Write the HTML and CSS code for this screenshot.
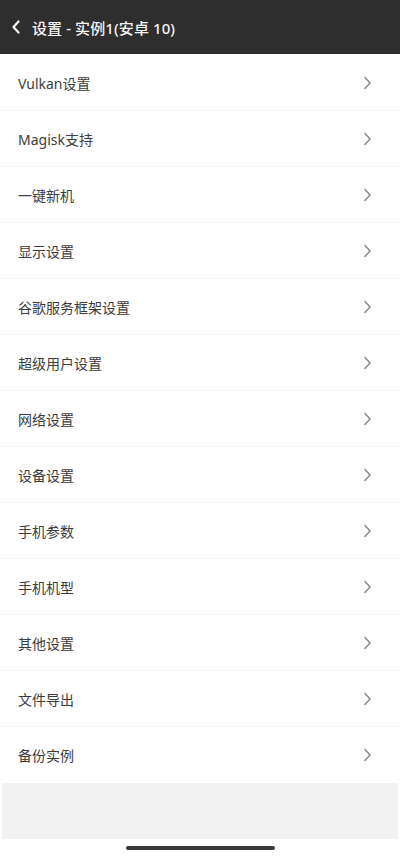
FILE: index.html
```html
<!DOCTYPE html>
<html lang="zh-CN">
<head>
<meta charset="utf-8">
<title>设置 - 实例1(安卓 10)</title>
<link rel="stylesheet" href="styles.css">
</head>
<body>
<div class="screen">
  <header class="topbar">
    <svg class="back" width="10" height="14" viewBox="0 0 10 14"><path d="M7.5 1.5 L2.5 7 L7.5 12.5" fill="none" stroke="#fff" stroke-width="2.2" stroke-linecap="round" stroke-linejoin="round"/></svg>
    <span class="title">设置 - 实例1(安卓 10)</span>
  </header>
  <ul class="list">
    <li class="row"><span>Vulkan设置</span><svg class="chev" width="9" height="14" viewBox="0 0 9 14"><path d="M2 1.5 L7 7 L2 12.5" fill="none" stroke="#8e8e8e" stroke-width="1.6" stroke-linecap="round" stroke-linejoin="round"/></svg></li>
    <li class="row"><span>Magisk支持</span><svg class="chev" width="9" height="14" viewBox="0 0 9 14"><path d="M2 1.5 L7 7 L2 12.5" fill="none" stroke="#8e8e8e" stroke-width="1.6" stroke-linecap="round" stroke-linejoin="round"/></svg></li>
    <li class="row"><span>一键新机</span><svg class="chev" width="9" height="14" viewBox="0 0 9 14"><path d="M2 1.5 L7 7 L2 12.5" fill="none" stroke="#8e8e8e" stroke-width="1.6" stroke-linecap="round" stroke-linejoin="round"/></svg></li>
    <li class="row"><span>显示设置</span><svg class="chev" width="9" height="14" viewBox="0 0 9 14"><path d="M2 1.5 L7 7 L2 12.5" fill="none" stroke="#8e8e8e" stroke-width="1.6" stroke-linecap="round" stroke-linejoin="round"/></svg></li>
    <li class="row"><span>谷歌服务框架设置</span><svg class="chev" width="9" height="14" viewBox="0 0 9 14"><path d="M2 1.5 L7 7 L2 12.5" fill="none" stroke="#8e8e8e" stroke-width="1.6" stroke-linecap="round" stroke-linejoin="round"/></svg></li>
    <li class="row"><span>超级用户设置</span><svg class="chev" width="9" height="14" viewBox="0 0 9 14"><path d="M2 1.5 L7 7 L2 12.5" fill="none" stroke="#8e8e8e" stroke-width="1.6" stroke-linecap="round" stroke-linejoin="round"/></svg></li>
    <li class="row"><span>网络设置</span><svg class="chev" width="9" height="14" viewBox="0 0 9 14"><path d="M2 1.5 L7 7 L2 12.5" fill="none" stroke="#8e8e8e" stroke-width="1.6" stroke-linecap="round" stroke-linejoin="round"/></svg></li>
    <li class="row"><span>设备设置</span><svg class="chev" width="9" height="14" viewBox="0 0 9 14"><path d="M2 1.5 L7 7 L2 12.5" fill="none" stroke="#8e8e8e" stroke-width="1.6" stroke-linecap="round" stroke-linejoin="round"/></svg></li>
    <li class="row"><span>手机参数</span><svg class="chev" width="9" height="14" viewBox="0 0 9 14"><path d="M2 1.5 L7 7 L2 12.5" fill="none" stroke="#8e8e8e" stroke-width="1.6" stroke-linecap="round" stroke-linejoin="round"/></svg></li>
    <li class="row"><span>手机机型</span><svg class="chev" width="9" height="14" viewBox="0 0 9 14"><path d="M2 1.5 L7 7 L2 12.5" fill="none" stroke="#8e8e8e" stroke-width="1.6" stroke-linecap="round" stroke-linejoin="round"/></svg></li>
    <li class="row"><span>其他设置</span><svg class="chev" width="9" height="14" viewBox="0 0 9 14"><path d="M2 1.5 L7 7 L2 12.5" fill="none" stroke="#8e8e8e" stroke-width="1.6" stroke-linecap="round" stroke-linejoin="round"/></svg></li>
    <li class="row"><span>文件导出</span><svg class="chev" width="9" height="14" viewBox="0 0 9 14"><path d="M2 1.5 L7 7 L2 12.5" fill="none" stroke="#8e8e8e" stroke-width="1.6" stroke-linecap="round" stroke-linejoin="round"/></svg></li>
    <li class="row"><span>备份实例</span><svg class="chev" width="9" height="14" viewBox="0 0 9 14"><path d="M2 1.5 L7 7 L2 12.5" fill="none" stroke="#8e8e8e" stroke-width="1.6" stroke-linecap="round" stroke-linejoin="round"/></svg></li>
  </ul>
  <div class="filler"></div>
  <div class="homebar"><div class="indicator"></div></div>
</div>
</body>
</html>
```
FILE: styles.css
```css
* { box-sizing: border-box; }
html, body {
  margin: 0;
  padding: 0;
  background: #ffffff;
}
body {
  font-family: "Noto Sans", "Noto Sans CJK SC", sans-serif;
  width: 400px;
  height: 867px;
  overflow: hidden;
}
.screen {
  display: flex;
  flex-direction: column;
  width: 400px;
  height: 867px;
}
.topbar {
  height: 54px;
  background: #2e2e2e;
  display: flex;
  align-items: center;
  padding-left: 11px;
  gap: 11px;
  flex-shrink: 0;
  margin-bottom: 1px;
}
.back { display: block; }
.title {
  color: #f4f4f4;
  font-size: 15px;
  font-weight: 500;
  letter-spacing: 0.1px;
}
.list {
  list-style: none;
  margin: 0;
  padding: 0;
}
.row {
  height: 56px;
  display: flex;
  align-items: center;
  justify-content: space-between;
  padding: 0 28px 0 18px;
  font-size: 14px;
  color: #3c3c3c;
  border-bottom: 1px solid #f3f3f3;
}
.row:last-child { border-bottom: none; }
.chev { display: block; }
.filler {
  height: 56px;
  background: #f2f2f2;
  margin: 0 2px;
  flex-shrink: 0;
}
.homebar {
  flex: 1;
  display: flex;
  justify-content: center;
  padding-top: 7px;
}
.indicator {
  width: 149px;
  height: 4px;
  border-radius: 2px;
  background: #3a3a3a;
}
```
